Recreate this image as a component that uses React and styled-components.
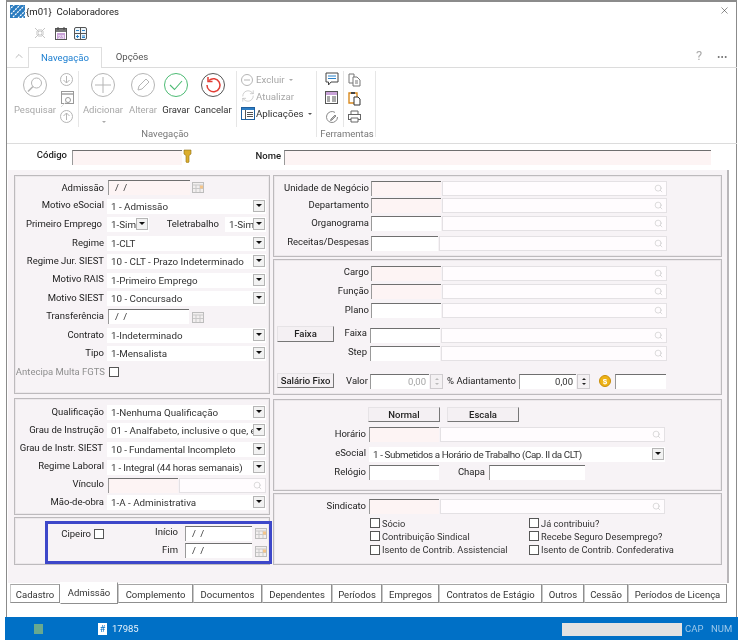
import React from "react";
import styled, { createGlobalStyle } from "styled-components";
import { ChevronUp, Ellipsis, RefreshCw, Search, X } from "lucide-react";

const GlobalStyle = createGlobalStyle`
  html, body { margin: 0; padding: 0; background: #fff; }
  body { font-family: Roboto, "Noto Sans", sans-serif; font-size: 9.5px; color: #222; }
`;

const Page = styled.div`
  position: relative;
  width: 740px;
  height: 642px;
  overflow: hidden;
  background: #fff;
  filter: blur(0.4px);
`;

const Frame = styled.div`
  position: absolute;
  left: 6px;
  top: 0;
  width: 731px;
  height: 640px;
  box-sizing: border-box;
  border: 1px solid #8b8b8b;
  border-top-width: 2px;
  border-bottom: 0;
`;

const Spot = styled.div`
  position: absolute;
  left: ${(p) => p.$x}px;
  top: ${(p) => p.$y}px;
  display: flex;
  line-height: 0;
`;

const Title = styled.div`
  position: absolute;
  left: 26px;
  top: 4px;
  font-size: 9.6px;
  line-height: 15px;
  color: #222;
`;

const HelpMark = styled.div`
  position: absolute;
  left: 696px;
  top: 48px;
  font-size: 13px;
  line-height: 16px;
  color: #aaa;
`;

const RibbonTab = styled.div`
  position: absolute;
  left: ${(p) => p.$x}px;
  top: 47px;
  width: ${(p) => p.$w}px;
  height: 21px;
  box-sizing: border-box;
  text-align: center;
  line-height: 20px;
  font-size: 9.6px;
  z-index: 2;
  color: ${(p) => (p.$active ? "#1b7ed0" : "#555")};
  background: ${(p) => (p.$active ? "#fff" : "transparent")};
  border: ${(p) => (p.$active ? "1px solid #dedede" : "0")};
  border-bottom: 0;
`;

const RibbonLine = styled.div`
  position: absolute;
  left: 7px;
  width: 730px;
  top: ${(p) => p.$y}px;
  height: 1px;
  background: #dcdcdc;
`;

const Sep = styled.div`
  position: absolute;
  left: ${(p) => p.$x}px;
  top: 71px;
  width: 1px;
  height: ${(p) => p.$h}px;
  background: #e6e6e6;
`;

const RibbonLabel = styled.div`
  position: absolute;
  left: ${(p) => p.$x - 40}px;
  top: ${(p) => p.$y}px;
  width: 80px;
  text-align: center;
  font-size: 9.5px;
  line-height: 13px;
  color: ${(p) => (p.$off ? "#a8a8a8" : p.$soft ? "#777" : "#333")};
`;

const RibbonSide = styled.div`
  position: absolute;
  left: 256px;
  top: ${(p) => p.$y}px;
  font-size: 9.7px;
  line-height: 13px;
  white-space: nowrap;
  color: ${(p) => (p.$off ? "#a8a8a8" : "#333")};
`;

const Caret = styled.span`
  display: inline-block;
  margin-left: 4px;
  vertical-align: middle;
  border-left: 2px solid transparent;
  border-right: 2px solid transparent;
  border-top: 2px solid ${(p) => (p.$off ? "#aaa" : "#555")};
`;

const Sheet = styled.div`
  position: absolute;
  left: 8px;
  top: 170px;
  width: 719px;
  height: 413px;
  background: #f7f3f6;
  border-right: 2px solid #b9b6b9;
`;

const Panel = styled.div`
  position: absolute;
  left: ${(p) => p.$x}px;
  top: ${(p) => p.$y}px;
  width: ${(p) => p.$w}px;
  height: ${(p) => p.$h}px;
  box-sizing: border-box;
  border: 1px solid #bdbabd;
  box-shadow: inset 0 0 0 1px #ece8eb;
`;

const HighlightBox = styled.div`
  position: absolute;
  left: 45px;
  top: 521px;
  width: 227px;
  height: 43px;
  box-sizing: border-box;
  border: 3px solid #3d47c9;
`;

const Label = styled.div`
  position: absolute;
  left: ${(p) => p.$right - 120}px;
  top: ${(p) => p.$y}px;
  width: 120px;
  height: 14px;
  line-height: 14px;
  text-align: right;
  white-space: nowrap;
  font-weight: ${(p) => (p.$strong ? 500 : 400)};
  color: ${(p) => (p.$off ? "#8f8f8f" : "#222")};
`;

const Input = styled.div`
  position: absolute;
  left: ${(p) => p.$x}px;
  top: ${(p) => p.$y}px;
  width: ${(p) => p.$w}px;
  height: 15px;
  box-sizing: border-box;
  line-height: 14px;
  padding: 0 ${(p) => (p.$right ? 3 : 6)}px;
  white-space: nowrap;
  word-spacing: 2px;
  overflow: hidden;
  text-align: ${(p) => (p.$right ? "right" : "left")};
  background: ${(p) => (p.$req ? "#fdf4f4" : "#fff")};
  border-top: 1px solid #6f6f6f;
  border-left: 1px solid #999;
  color: ${(p) => (p.$off ? "#a5a5a5" : "#333")};
`;

const Select = styled.div`
  position: absolute;
  left: ${(p) => p.$x}px;
  top: ${(p) => p.$y}px;
  width: ${(p) => p.$w}px;
  height: 15px;
  box-sizing: border-box;
  background: #fff;
  line-height: 15px;
  padding-left: 4px;
  font-size: 9.8px;
  letter-spacing: ${(p) => p.$tight || 0}px;
  white-space: nowrap;
  overflow: hidden;
  color: #333;
`;

const Arrow = styled.div`
  position: absolute;
  right: 1px;
  top: 1px;
  width: 12px;
  height: 12px;
  box-sizing: border-box;
  background: #f2f2f2;
  border: 1px solid #b5b5b5;
  &::after {
    content: "";
    position: absolute;
    left: 2px;
    top: 3px;
    border-left: 3px solid transparent;
    border-right: 3px solid transparent;
    border-top: 3px solid #111;
  }
`;

const LookupBox = styled.div`
  position: absolute;
  left: ${(p) => p.$x}px;
  top: ${(p) => p.$y}px;
  width: ${(p) => p.$w}px;
  height: 15px;
  box-sizing: border-box;
  background: #fffcfe;
  border: 1px solid #e4e1e4;
  display: flex;
  align-items: center;
  justify-content: flex-end;
  padding-right: 3px;
  color: #c4c4c4;
`;

const Button = styled.div`
  position: absolute;
  left: ${(p) => p.$x}px;
  top: ${(p) => p.$y}px;
  width: ${(p) => p.$w}px;
  height: ${(p) => p.$h || 15}px;
  box-sizing: border-box;
  background: #f4f0f3;
  border-top: 1px solid #e6e3e6;
  border-left: 1px solid #e6e3e6;
  border-right: 1px solid #777;
  border-bottom: 1px solid #777;
  text-align: center;
  line-height: 13px;
  font-weight: 500;
  font-size: 9.5px;
  color: #222;
`;

const Spinner = styled.div`
  position: absolute;
  left: ${(p) => p.$x}px;
  top: ${(p) => p.$y}px;
  width: 13px;
  height: 15px;
  box-sizing: border-box;
  border: 1px solid #cfcccf;
  background: #f4f1f3;
  &::before,
  &::after {
    content: "";
    position: absolute;
    left: 3.5px;
    border-left: 2px solid transparent;
    border-right: 2px solid transparent;
  }
  &::before {
    top: 3px;
    border-bottom: 2px solid ${(p) => (p.$off ? "#bbb" : "#222")};
  }
  &::after {
    bottom: 3px;
    border-top: 2px solid ${(p) => (p.$off ? "#bbb" : "#222")};
  }
`;

const Box = styled.div`
  position: absolute;
  left: ${(p) => p.$x}px;
  top: ${(p) => p.$y}px;
  width: 10px;
  height: 10px;
  box-sizing: border-box;
  border: 1px solid #555;
  background: #fff;
`;

const CheckText = styled.div`
  position: absolute;
  left: ${(p) => p.$x}px;
  top: ${(p) => p.$y}px;
  line-height: 13px;
  font-size: 9.3px;
  white-space: nowrap;
  color: #333;
`;

const PageTab = styled.div`
  position: absolute;
  left: ${(p) => p.$x}px;
  top: ${(p) => (p.$active ? 582 : 584)}px;
  width: ${(p) => p.$w}px;
  height: ${(p) => (p.$active ? 22 : 19)}px;
  box-sizing: border-box;
  text-align: center;
  line-height: 20px;
  font-size: 9.5px;
  color: #333;
  background: #fff;
  z-index: ${(p) => (p.$active ? 2 : 1)};
  border-top: 1px solid ${(p) => (p.$active ? "#fff" : "#a5a5a5")};
  border-left: 1px solid ${(p) => (p.$active ? "#fff" : "#c8c8c8")};
  border-right: 1px solid #8f8f8f;
  border-bottom: 1px solid #8f8f8f;
`;

const StatusBar = styled.div`
  position: absolute;
  left: 5px;
  top: 617px;
  width: 733px;
  height: 23px;
  background: #0070c6;
`;

const StatusSquare = styled.div`
  position: absolute;
  left: 29px;
  top: 7px;
  width: 9px;
  height: 10px;
  background: #68a98f;
`;

const HashIcon = styled.div`
  position: absolute;
  left: 93px;
  top: 6px;
  width: 9px;
  height: 12px;
  background: #fff;
  color: #0070c6;
  font-size: 9px;
  line-height: 12px;
  text-align: center;
`;

const StatusText = styled.div`
  position: absolute;
  left: ${(p) => p.$x}px;
  top: 5px;
  line-height: 13px;
  font-size: 9.5px;
  color: ${(p) => (p.$dim ? "#9cc8ea" : "#e8f3fb")};
`;

const StatusField = styled.div`
  position: absolute;
  left: 557px;
  top: 6px;
  width: 120px;
  height: 13px;
  background: #e2e2e2;
`;

const Logo = () => (
  <svg width="15" height="13" viewBox="0 0 15 13">
    <rect width="15" height="13" fill="#2b7cc0" />
    <path d="M-1 5 5 -1M1 9 10 0M3 12 14 1M8 13 16 5M12 13 16 9" stroke="#fff" strokeWidth="1.2" strokeDasharray="2 1" />
  </svg>
);

const Shrink = () => (
  <svg width="12" height="12" viewBox="0 0 12 12" fill="none" stroke="#c4c4c4">
    <path d="M1 1 5 5M5 2V5H2M11 1 7 5M7 2V5H10M1 11 5 7M5 10V7H2M11 11 7 7M7 10V7H10" />
  </svg>
);

const CalendarTool = () => (
  <svg width="12" height="13" viewBox="0 0 12 13">
    <rect x=".5" y="1.5" width="11" height="11" fill="#fff" stroke="#555" />
    <rect x="1" y="2" width="10" height="3" fill="#777" />
    <rect x="2" y="6" width="8" height="6" fill="#c9a2d8" />
    <text x="6" y="11.500" textAnchor="middle" fontSize="6" fill="#fff" fontFamily="Roboto">23</text>
    <path d="M3 0v3M9 0v3" stroke="#444" />
  </svg>
);

const GridTool = () => (
  <svg width="13" height="13" viewBox="0 0 13 13" fill="none">
    <rect x=".5" y=".5" width="12" height="12" rx="1.5" stroke="#555" fill="#eef6fb" />
    <path d="M6.5 1V12M1 6.5H12" stroke="#555" />
    <path d="M2 3.5H5M8 3.5H11M3.5 8V11M2 9.5H5M8 9H11M8 10.5H11" stroke="#2b82c9" />
  </svg>
);

const Round = ({ size = 24, color = "#aaa", children }) => (
  <svg width={size} height={size} viewBox="0 0 24 24" fill="none" stroke={color} strokeWidth="1">
    <circle cx="12" cy="12" r="11.5" />
    {children}
  </svg>
);

const SmallArrow = ({ up }) => (
  <svg width="13" height="13" viewBox="0 0 13 13" fill="none" stroke="#b5b5b5">
    <circle cx="6.5" cy="6.5" r="6" />
    <path d={up ? "M6.5 10V3M3.5 6 6.5 3 9.5 6" : "M6.5 3V10M3.5 7 6.5 10 9.5 7"} />
  </svg>
);

const SearchPanel = () => (
  <svg width="14" height="17" viewBox="0 0 14 17" fill="none" stroke="#999">
    <rect x="1.500" y=".5" width="12" height="12" />
    <path d="M2 3H13" strokeWidth="2" stroke="#bbb" />
    <circle cx="8" cy="9" r="2.5" />
    <path d="M6 11 1 16" stroke="#ddd" />
  </svg>
);

const Apps = () => (
  <svg width="14" height="13" viewBox="0 0 14 13" fill="none">
    <rect x=".5" y=".5" width="13" height="12" stroke="#1f5f9e" />
    <rect x="1" y="1" width="12" height="2" fill="#2c7dc4" />
    <path d="M4.5 3V12M6 5.5H12M6 7.5H12M6 9.5H12" stroke="#555" />
  </svg>
);

const Chat = () => (
  <svg width="14" height="14" viewBox="0 0 14 14" fill="none">
    <path d="M1 1H13V10H6L3.5 13V10H1Z" stroke="#444" fill="#fff" />
    <path d="M3 4H11M3 6.500H11" stroke="#2b82c9" />
  </svg>
);

const Form = () => (
  <svg width="13" height="13" viewBox="0 0 13 13" fill="none">
    <rect x=".5" y=".5" width="12" height="12" stroke="#555" />
    <rect x="1" y="1" width="11" height="3" fill="#c9a2d8" />
    <path d="M2 6H5M7 6H11M2 8H5M7 8H11M2 10H5M7 10H11" stroke="#555" />
  </svg>
);

const Clock = () => (
  <svg width="14" height="14" viewBox="0 0 14 14" fill="none" stroke="#8a8a8a">
    <path d="M10 2.4A5.5 5.5 0 1 0 12.5 7" />
    <path d="M6 9 10 5 11 6 7 10 5.500 10.500Z" fill="#bbb" />
  </svg>
);

const Copy = () => (
  <svg width="13" height="14" viewBox="0 0 13 14" fill="none" stroke="#777">
    <path d="M1 1H6V10H1Z" />
    <path d="M5 4H9L12 7V13H5Z" fill="#fff" />
    <path d="M7 8H10M7 10H10" />
  </svg>
);

const Paste = () => (
  <svg width="13" height="15" viewBox="0 0 13 15" fill="none">
    <path d="M1 2H9V12H1Z" stroke="#d98a1f" strokeWidth="1.4" />
    <path d="M3 1H7V3H3Z" fill="#444" />
    <path d="M6 6H10L12 8V14H6Z" stroke="#333" fill="#fff" />
  </svg>
);

const Printer = () => (
  <svg width="13" height="13" viewBox="0 0 13 13" fill="none" stroke="#666">
    <path d="M3 4V1H10V4" />
    <rect x=".5" y="4.500" width="12" height="5" />
    <path d="M3 8H10V12H3Z" fill="#fff" />
  </svg>
);

const Key = () => (
  <svg width="9" height="14" viewBox="0 0 9 14">
    <path d="M1 1H8V5L6 6.500V13L4.500 14 3 13V6.500L1 5Z" fill="#dcae2e" stroke="#8f6f14" strokeWidth=".6" />
  </svg>
);

const Calendar = ({ off }) => (
  <svg width="12" height="11" viewBox="0 0 12 11">
    <rect x=".5" y=".5" width="11" height="10" fill="#f2efef" stroke="#bdbdbd" />
    <path d="M.5 3H11.500M4 3V10M8 3V10M1 6.500H11" stroke="#c9c9c9" />
    {!off && <rect x="8" y="3.500" width="3" height="3" fill="#f4c48a" />}
  </svg>
);

const Coin = () => (
  <svg width="12" height="12" viewBox="0 0 12 12">
    <circle cx="6" cy="6" r="5.500" fill="#eeb315" stroke="#c98e0a" />
    <text x="6" y="9" textAnchor="middle" fontSize="8" fontWeight="700" fill="#fff" fontFamily="Liberation Sans">$</text>
  </svg>
);

const Combo = ({ x = 107, y, w = 159, text, tight }) => (
  <Select $x={x} $y={y} $w={w} $tight={tight}>
    {text}
    <Arrow />
  </Select>
);

const Lookup = ({ x = 371, y, split = 70, end = 667, req }) => (
  <>
    <Input $x={x} $y={y} $w={split} $req={req} />
    <LookupBox $x={x + split + 1} $y={y} $w={end - x - split - 1}>
      <Search size={9} strokeWidth={1.6} />
    </LookupBox>
  </>
);

const tabs = [
  ["Cadastro", 10, 50],
  ["Admissão", 60, 58, true],
  ["Complemento", 118, 75],
  ["Documentos", 193, 69],
  ["Dependentes", 262, 70],
  ["Períodos", 332, 50],
  ["Empregos", 382, 57],
  ["Contratos de Estágio", 439, 103],
  ["Outros", 542, 42],
  ["Cessão", 584, 44],
  ["Períodos de Licença", 628, 99],
];

export default function App() {
  return (
    <Page>
      <GlobalStyle />
      <Frame />
      <Spot $x={10} $y={5}><Logo /></Spot>
      <Title>{"{m01}"}&nbsp;&nbsp;Colaboradores</Title>
      <Spot $x={719} $y={5}><X size={11} strokeWidth={1.2} color="#333" /></Spot>
      <Spot $x={34} $y={27}><Shrink /></Spot>
      <Spot $x={55} $y={27}><CalendarTool /></Spot>
      <Spot $x={74} $y={27}><GridTool /></Spot>

      <Spot $x={13} $y={50}><ChevronUp size={12} strokeWidth={1} color="#777" /></Spot>
      <RibbonTab $x={28} $w={74} $active>Navegação</RibbonTab>
      <RibbonTab $x={102} $w={60}>Opções</RibbonTab>
      <HelpMark>?</HelpMark>
      <Spot $x={716} $y={51}><Ellipsis size={12} color="#666" /></Spot>
      <RibbonLine $y={67} />
      <RibbonLine $y={143} />

      <Spot $x={23} $y={73}>
        <Round color="#b5b5b5"><circle cx="13.500" cy="10" r="5" /><path d="M10 13.500 5 18.500" strokeWidth="1.6" /></Round>
      </Spot>
      <Spot $x={60} $y={73}><SmallArrow /></Spot>
      <Spot $x={60} $y={91}><SearchPanel /></Spot>
      <Spot $x={60} $y={110}><SmallArrow up /></Spot>
      <RibbonLabel $x={35} $y={103} $off>Pesquisar</RibbonLabel>
      <Sep $x={78} $h={56} />
      <Spot $x={91} $y={73}>
        <Round color="#b5b5b5"><path d="M12 4V20M4 12H20" /></Round>
      </Spot>
      <RibbonLabel $x={103} $y={103} $off>Adicionar</RibbonLabel>
      <Spot $x={98} $y={121}><Caret $off /></Spot>
      <Spot $x={131} $y={73}>
        <Round color="#b5b5b5"><path d="M7 17 8 13 15 6 18 9 11 16Z" /></Round>
      </Spot>
      <RibbonLabel $x={143} $y={103} $off>Alterar</RibbonLabel>
      <Spot $x={164} $y={73}>
        <Round color="#4dbb74"><path d="M6 12 10.500 16.500 18 8" strokeWidth="1.1" /></Round>
      </Spot>
      <RibbonLabel $x={176} $y={103}>Gravar</RibbonLabel>
      <Spot $x={201} $y={73}>
        <Round color="#555">
          <path d="M8 7.500A6.500 6.500 0 1 1 6 12" stroke="#e23d35" strokeWidth="1.5" />
          <path d="M7 4V8.500H11.500" stroke="#e23d35" strokeWidth="1.5" />
        </Round>
      </Spot>
      <RibbonLabel $x={213} $y={103}>Cancelar</RibbonLabel>
      <Sep $x={236} $h={56} />
      <Spot $x={241} $y={74}>
        <svg width="12" height="12" viewBox="0 0 12 12" fill="none" stroke="#b5b5b5"><circle cx="6" cy="6" r="5.500" /><path d="M3 6H9" /></svg>
      </Spot>
      <RibbonSide $y={73} $off>Excluir<Caret $off /></RibbonSide>
      <Spot $x={241} $y={89}><RefreshCw size={14} strokeWidth={1} color="#b0b0b0" /></Spot>
      <RibbonSide $y={90} $off>Atualizar</RibbonSide>
      <Spot $x={241} $y={107}><Apps /></Spot>
      <RibbonSide $y={107}>Aplicações<Caret /></RibbonSide>
      <RibbonLabel $x={165} $y={127} $soft>Navegação</RibbonLabel>
      <Sep $x={316} $h={66} />
      <Spot $x={325} $y={72}><Chat /></Spot>
      <Spot $x={325} $y={91}><Form /></Spot>
      <Spot $x={325} $y={110}><Clock /></Spot>
      <Sep $x={343} $h={56} />
      <Spot $x={348} $y={73}><Copy /></Spot>
      <Spot $x={348} $y={91}><Paste /></Spot>
      <Spot $x={348} $y={110}><Printer /></Spot>
      <RibbonLabel $x={347} $y={127} $soft>Ferramentas</RibbonLabel>
      <Sep $x={375} $h={66} />

      <Label $right={67} $y={148} $strong>Código</Label>
      <Input $x={72} $y={150} $w={110} $req />
      <Spot $x={183} $y={149}><Key /></Spot>
      <Label $right={281} $y={149} $strong>Nome</Label>
      <Input $x={284} $y={150} $w={427} $req />

      <Sheet />
      <Panel $x={14} $y={175} $w={256} $h={219} />
      <Panel $x={14} $y={398} $w={256} $h={117} />
      <Panel $x={14} $y={517} $w={256} $h={48} />
      <Panel $x={273} $y={175} $w={449} $h={82} />
      <Panel $x={273} $y={259} $w={449} $h={136} />
      <Panel $x={273} $y={399} $w={449} $h={92} />
      <Panel $x={273} $y={493} $w={449} $h={72} />

      <Label $right={104} $y={181}>Admissão</Label>
      <Input $x={108} $y={180} $w={82} $req>/ /</Input>
      <Spot $x={192} $y={182}><Calendar /></Spot>
      <Label $right={104} $y={198}>Motivo eSocial</Label>
      <Combo y={199} text="1 - Admissão" />
      <Label $right={102} $y={217}>Primeiro Emprego</Label>
      <Combo y={217} w={42} text="1-Sim" />
      <Label $right={219} $y={217}>Teletrabalho</Label>
      <Combo x={225} y={217} w={41} text="1-Sim" />
      <Label $right={104} $y={236}>Regime</Label>
      <Combo y={236} text="1-CLT" />
      <Label $right={104} $y={254}>Regime Jur. SIEST</Label>
      <Combo y={254} text="10 - CLT - Prazo Indeterminado" />
      <Label $right={104} $y={272}>Motivo RAIS</Label>
      <Combo y={273} text="1-Primeiro Emprego" />
      <Label $right={104} $y={291}>Motivo SIEST</Label>
      <Combo y={291} text="10 - Concursado" />
      <Label $right={104} $y={309}>Transferência</Label>
      <Input $x={108} $y={309} $w={81}>/ /</Input>
      <Spot $x={192} $y={312}><Calendar off /></Spot>
      <Label $right={104} $y={328}>Contrato</Label>
      <Combo y={328} text="1-Indeterminado" />
      <Label $right={104} $y={346}>Tipo</Label>
      <Combo y={346} text="1-Mensalista" />
      <Label $right={105} $y={365} $off>Antecipa Multa FGTS</Label>
      <Box $x={109} $y={367} />

      <Label $right={104} $y={405}>Qualificação</Label>
      <Combo y={405} text="1-Nenhuma Qualificação" />
      <Label $right={104} $y={423}>Grau de Instrução</Label>
      <Combo y={423} text="01 - Analfabeto, inclusive o que, e" />
      <Label $right={103} $y={441}>Grau de Instr. SIEST</Label>
      <Combo y={442} text="10 - Fundamental Incompleto" tight={-0.1} />
      <Label $right={104} $y={459}>Regime Laboral</Label>
      <Combo y={460} text="1 - Integral (44 horas semanais)" tight={-0.2} />
      <Label $right={104} $y={477}>Vínculo</Label>
      <Lookup x={108} y={478} end={266} req />
      <Label $right={104} $y={495}>Mão-de-obra</Label>
      <Combo y={495} text="1-A - Administrativa" />

      <HighlightBox />
      <Label $right={91} $y={527}>Cipeiro</Label>
      <Box $x={94} $y={529} />
      <Label $right={178} $y={525}>Início</Label>
      <Input $x={185} $y={526} $w={67}>/ /</Input>
      <Spot $x={255} $y={528}><Calendar /></Spot>
      <Label $right={178} $y={543}>Fim</Label>
      <Input $x={185} $y={543} $w={67}>/ /</Input>
      <Spot $x={255} $y={546}><Calendar /></Spot>

      <Label $right={369} $y={181}>Unidade de Negócio</Label>
      <Lookup y={181} req />
      <Label $right={369} $y={198}>Departamento</Label>
      <Lookup y={198} req />
      <Label $right={369} $y={216}>Organograma</Label>
      <Lookup y={216} />
      <Label $right={369} $y={235}>Receitas/Despesas</Label>
      <Lookup y={236} split={67} />

      <Label $right={369} $y={265}>Cargo</Label>
      <Lookup y={266} req />
      <Label $right={369} $y={284}>Função</Label>
      <Lookup y={284} req />
      <Label $right={369} $y={303}>Plano</Label>
      <Lookup y={303} />
      <Button $x={277} $y={326} $w={57} $h={16}>Faixa</Button>
      <Label $right={367} $y={326}>Faixa</Label>
      <Lookup x={370} y={328} />
      <Label $right={367} $y={345}>Step</Label>
      <Lookup x={370} y={346} />
      <Button $x={277} $y={373} $w={57}>Salário Fixo</Button>
      <Label $right={368} $y={374}>Valor</Label>
      <Input $x={370} $y={374} $w={59} $right $off>0,00</Input>
      <Spinner $x={430} $y={374} $off />
      <Label $right={516} $y={374}>% Adiantamento</Label>
      <Input $x={519} $y={374} $w={57} $right>0,00</Input>
      <Spinner $x={577} $y={374} />
      <Spot $x={599} $y={375}><Coin /></Spot>
      <Input $x={615} $y={374} $w={51} />

      <Button $x={368} $y={407} $w={72}>Normal</Button>
      <Button $x={447} $y={407} $w={72}>Escala</Button>
      <Label $right={366} $y={427}>Horário</Label>
      <Lookup x={369} y={427} end={665} req />
      <Label $right={366} $y={446}>eSocial</Label>
      <Combo x={369} y={447} w={296} text="1 - Submetidos a Horário de Trabalho (Cap. II da CLT)" tight={-0.4} />
      <Label $right={366} $y={465}>Relógio</Label>
      <Input $x={369} $y={465} $w={70} />
      <Label $right={485} $y={465}>Chapa</Label>
      <Input $x={489} $y={465} $w={96} />

      <Label $right={366} $y={499}>Sindicato</Label>
      <Lookup x={369} y={499} end={665} req />
      <Box $x={370} $y={518} />
      <CheckText $x={382} $y={517}>Sócio</CheckText>
      <Box $x={370} $y={531} />
      <CheckText $x={382} $y={530}>Contribuição Sindical</CheckText>
      <Box $x={370} $y={545} />
      <CheckText $x={382} $y={543}>Isento de Contrib. Assistencial</CheckText>
      <Box $x={529} $y={518} />
      <CheckText $x={541} $y={517}>Já contribuiu?</CheckText>
      <Box $x={529} $y={531} />
      <CheckText $x={541} $y={530}>Recebe Seguro Desemprego?</CheckText>
      <Box $x={529} $y={545} />
      <CheckText $x={541} $y={543}>Isento de Contrib. Confederativa</CheckText>

      {tabs.map(([name, x, w, active]) => (
        <PageTab key={name} $x={x} $w={w} $active={active}>{name}</PageTab>
      ))}

      <StatusBar>
        <StatusSquare />
        <HashIcon>#</HashIcon>
        <StatusText $x={107}>17985</StatusText>
        <StatusField />
        <StatusText $x={680} $dim>CAP</StatusText>
        <StatusText $x={706} $dim>NUM</StatusText>
      </StatusBar>
    </Page>
  );
}
